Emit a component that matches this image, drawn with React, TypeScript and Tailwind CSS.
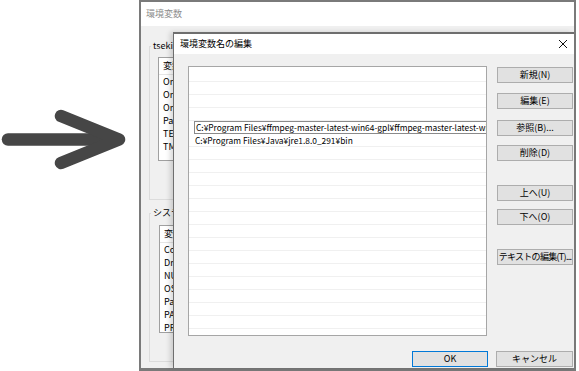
import { FC } from 'react';

// 環境変数ダイアログのスクリーンショット再現
const userVars = ['OneDrive', 'OneDriveCommercial', 'OneDriveConsumer', 'Path', 'TEMP', 'TMP'];
const sysVars = [
  'ComSpec',
  'DriverData',
  'NUMBER_OF_PROCESSORS',
  'OS',
  'Path',
  'PATHEXT',
  'PROCESSOR_ARCHITECTURE',
];

const rows: string[] = [
  '',
  '',
  '',
  '',
  'C:¥Program Files¥ffmpeg-master-latest-win64-gpl¥ffmpeg-master-latest-win64-gpl¥bin',
  'C:¥Program Files¥Java¥jre1.8.0_291¥bin',
  ...Array(16).fill(''),
];

const sideButtons = [
  { label: '新規(N)', mt: 'mt-0' },
  { label: '編集(E)', mt: 'mt-[10px]' },
  { label: '参照(B)...', mt: 'mt-[11px]' },
  { label: '削除(D)', mt: 'mt-[9px]' },
  { label: '上へ(U)', mt: 'mt-[24px]' },
  { label: '下へ(O)', mt: 'mt-[8px]' },
  { label: 'テキストの編集(T)...', mt: 'mt-[24px] text-[8px] tracking-[-0.7px]' },
];

interface BtnProps {
  label: string;
  className?: string;
}

const WinButton: FC<BtnProps> = ({ label, className }) => (
  <div
    className={`h-[16px] overflow-hidden border border-[#adadad] bg-[#e1e1e1] text-center text-[9px] leading-[14px] text-black whitespace-nowrap ${className ?? ''}`}
  >
    {label}
  </div>
);

const VarList: FC<{ items: string[]; height: string }> = ({ items, height }) => (
  <div className={`w-[300px] ${height} overflow-hidden border border-[#a0a0a0] bg-white`}>
    <div className="flex h-[17px] items-center border-b border-[#e5e5e5] pl-[4px] text-[9px]">
      <span className="w-[120px] border-r border-[#e5e5e5]">変数</span>
      <span className="pl-[4px]">値</span>
    </div>
    {items.map((name) => (
      <div key={name} className="h-[13px] pl-[4px] text-[9px] leading-[13px] text-black">
        {name}
      </div>
    ))}
  </div>
);

const Arrow = (): JSX.Element => (
  <svg width="130" height="64" viewBox="0 0 130 64" className="mt-[108px]">
    <g stroke="#464646" strokeWidth="12.5" strokeLinecap="round" strokeLinejoin="round" fill="none">
      <line x1="8" y1="31.5" x2="116" y2="31.5" />
      <polyline points="61,8 119,31.5 61,55" />
    </g>
  </svg>
);

const EditDialog = (): JSX.Element => (
  <div className="absolute left-[32px] top-[30px] h-[336px] w-[401px] border-l border-t-2 border-[#6e6e6e] bg-[#f0f0f0] shadow-[-3px_0_5px_rgba(0,0,0,0.15)]">
    <div className="flex h-[20px] items-center justify-between bg-white pl-[6px] pr-[6px]">
      <span className="text-[9px] text-black">環境変数名の編集</span>
      <svg width="10" height="10" viewBox="0 0 10 10">
        <path d="M1 1 L9 9 M9 1 L1 9" stroke="#111" strokeWidth="1" />
      </svg>
    </div>
    <div className="flex flex-col pl-[14px] pt-[12px]">
      <div className="flex">
        <div className="h-[270px] w-[299px] overflow-hidden border border-[#a6a6a6] bg-white pt-[2px]">
          {rows.map((text, i) =>
            i === 4 ? (
              <div key={i} className="flex h-[13px] items-center overflow-hidden">
                <div className="ml-[5px] h-[13px] w-[320px] shrink-0 overflow-hidden whitespace-nowrap border border-[#8a8a8a] pl-[1px] text-[8.4px] leading-[11px] text-black">
                  {text}
                </div>
              </div>
            ) : (
              <div
                key={i}
                className="h-[13px] overflow-hidden whitespace-nowrap border-b border-[#f0f0f0] pl-[6px] text-[8.4px] leading-[13px] text-black"
              >
                {text}
              </div>
            )
          )}
        </div>
        <div className="ml-[10px] flex w-[76px] flex-col pt-[1px]">
          {sideButtons.map((b) => (
            <WinButton key={b.label} label={b.label} className={b.mt} />
          ))}
        </div>
      </div>
      <div className="mt-[15px] flex justify-end gap-[8px] pr-[1px]">
        <WinButton label="OK" className="w-[76px] !border-[#0078d7]" />
        <WinButton label="キャンセル" className="w-[77px]" />
      </div>
    </div>
  </div>
);

const App = (): JSX.Element => {
  return (
    <div className="flex h-[371px] w-[579px] overflow-hidden bg-white font-['Noto_Sans_CJK_JP','Noto_Sans',sans-serif]">
      <div className="w-[139px] shrink-0">
        <Arrow />
      </div>
      <div className="relative flex h-[371px] w-[437px] shrink-0 flex-col border-x-2 border-t-2 border-b-[3px] border-[#7a7a7a] bg-[#f0f0f0]">
        <div className="flex h-[24px] shrink-0 items-center bg-white pl-[5px] text-[9px] text-[#8c8c8c]">
          環境変数
        </div>
        <div className="flex flex-col pl-[8px]">
          <fieldset className="mt-[14px] h-[160px] w-[400px] border border-[#dcdcdc] pl-[8px] pt-[5px]">
            <legend className="-ml-[7px] px-[2px] text-[9px] leading-[12px] text-black">
              tsekiのユーザー環境変数(U)
            </legend>
            <VarList items={userVars} height="h-[104px]" />
          </fieldset>
          <fieldset className="mt-[7px] h-[155px] w-[400px] border border-[#dcdcdc] pl-[9px] pt-[6px]">
            <legend className="-ml-[8px] px-[2px] text-[9px] leading-[12px] text-black">
              システム環境変数(S)
            </legend>
            <VarList items={sysVars} height="h-[108px]" />
          </fieldset>
        </div>
        <EditDialog />
      </div>
    </div>
  );
};

export default App;
